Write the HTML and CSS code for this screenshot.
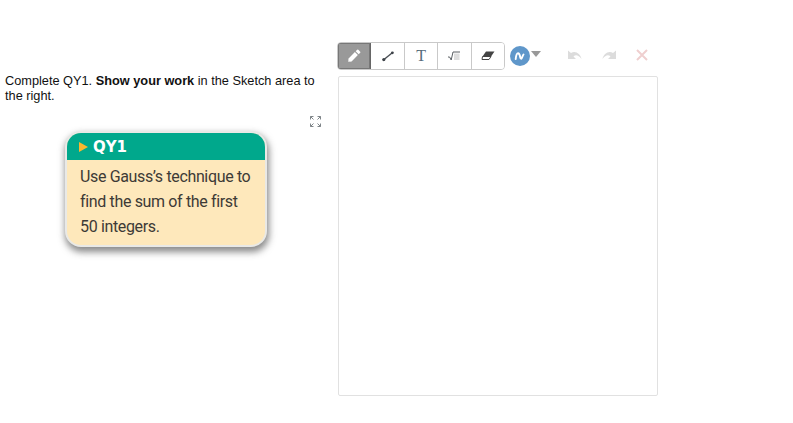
FILE: index.html
```html
<!DOCTYPE html>
<html lang="en">
<head>
<meta charset="utf-8">
<title>Sketch</title>
<link rel="stylesheet" href="styles.css">
</head>
<body>
<main class="page">
  <section class="question">
    <p class="prompt">Complete QY1. <strong>Show your work</strong> in the Sketch area to the right.</p>
    <div class="expand-row">
      <svg class="expand" width="11" height="11" viewBox="0 0 11 11" fill="none" stroke="#7f8589" stroke-width="1">
        <path d="M.5 3.500v-3h3M.5.5l3 3M10.500 3.500v-3h-3M10.500.5l-3 3M.5 7.500v3h3M.5 10.500l3-3M10.500 7.500v3h-3M10.500 10.500l-3-3"/>
      </svg>
    </div>
    <article class="card">
      <header class="card-head"><span class="card-arrow"></span><span class="card-title">QY1</span></header>
      <div class="card-body">
        <div>Use Gauss’s technique to</div>
        <div>find the sum of the first</div>
        <div>50 integers.</div>
      </div>
    </article>
  </section>
  <section class="sketch">
    <div class="toolbar">
      <div class="tools">
        <button class="tool tool-active" aria-label="Pencil">
          <svg width="14" height="14" viewBox="0 0 14 14"><path d="M1 13l.6-3.600 6.300-6.300 3 3-6.300 6.300z" fill="#fff"/><path d="M8.700 2.300l1.500-1.500a.8.800 0 0 1 1.100 0l1.900 1.900a.8.800 0 0 1 0 1.100l-1.500 1.500z" fill="#fff"/><path d="M1.300 11l1.700 1.700-2 .3z" fill="#ccc"/></svg>
        </button>
        <button class="tool" aria-label="Line">
          <svg width="14" height="14" viewBox="0 0 14 14"><path d="M3 10.500l8-6.500" stroke="#4a4f55" stroke-width="1.400"/><circle cx="2.800" cy="10.600" r="1.600" fill="#3d4248"/><circle cx="11.400" cy="3.800" r="1.400" fill="#3d4248"/></svg>
        </button>
        <button class="tool tool-text" aria-label="Text">T</button>
        <button class="tool" aria-label="Math">
          <svg width="14" height="14" viewBox="0 0 14 14"><rect x="7" y="4.500" width="5.500" height="6.500" fill="#dedede"/><path d="M1 8h1.600l1.600 3L6 3h7" fill="none" stroke="#5a5f63" stroke-width="1"/></svg>
        </button>
        <button class="tool" aria-label="Eraser">
          <svg width="14" height="14" viewBox="0 0 14 14"><path d="M5 2.500h8.500l-3.500 5H1.500z" fill="#444"/><path d="M1.500 7.500H10L8 10.500H1z" fill="#fff" stroke="#444" stroke-width="1"/></svg>
        </button>
      </div>
      <button class="stroke-btn" aria-label="Stroke colour">
        <span class="stroke-dot">
          <svg width="14" height="14" viewBox="0 0 14 14"><path d="M2.700 10C3 7 3.500 4.200 5 4.200s2 2.500 2.300 4.300c.3 1.500 1 1.500 1.500.5.500-1 1-2.500 1.700-3.500" fill="none" stroke="#fff" stroke-width="1.900" stroke-linecap="round"/></svg>
        </span>
        <span class="caret"></span>
      </button>
      <div class="history">
        <svg width="14" height="10" viewBox="0 0 14 10"><path d="M0 .5v8.500h8L5.500 6.500C7.500 4.500 10.500 5 13.500 9 12.500 3.500 7 0 3 3z" fill="#dcdcdc"/></svg>
        <svg width="14" height="10" viewBox="0 0 14 10"><path d="M14 .5v8.500H6L8.500 6.500C6.500 4.500 3.500 5 .5 9 1.500 3.500 7 0 11 3z" fill="#dcdcdc"/></svg>
        <svg width="12" height="12" viewBox="0 0 12 12"><path d="M1 1l10 10M11 1L1 11" stroke="#efcfcf" stroke-width="2"/></svg>
      </div>
    </div>
    <div class="canvas"></div>
  </section>
</main>
</body>
</html>
```

FILE: styles.css
```css
html, body {
  margin: 0;
  padding: 0;
  background: #fff;
}

.page {
  display: flex;
  align-items: flex-start;
  font-family: "Liberation Sans", Arial, sans-serif;
  color: #111;
}

.question {
  width: 337px;
  flex: none;
  padding-top: 73px;
  box-sizing: border-box;
}

.prompt {
  margin: 0 0 0 5px;
  width: 318px;
  font-size: 12.75px;
  line-height: 15px;
}

.expand-row {
  display: flex;
  justify-content: flex-end;
  padding: 13px 16px 0 0;
  height: 11px;
}

.expand {
  display: block;
}

.card {
  width: 198px;
  margin: 4px 0 0 65px;
  border: 2px solid #e9e9e6;
  border-radius: 16px;
  overflow: hidden;
  background: #fee8bb;
  box-shadow: 1px 4px 7px 1px rgba(60, 60, 60, .6);
}

.card-head {
  display: flex;
  align-items: center;
  height: 27px;
  background: #00a88c;
  padding-left: 12px;
  gap: 5px;
}

.card-arrow {
  width: 0;
  height: 0;
  border-left: 9px solid #fbb72f;
  border-top: 5px solid transparent;
  border-bottom: 5px solid transparent;
}

.card-title {
  font-family: "DejaVu Sans", sans-serif;
  font-size: 15px;
  font-weight: 700;
  color: #fff;
}

.card-body {
  padding: 4px 0 0 13px;
  height: 85px;
  box-sizing: border-box;
  font-family: "Roboto", sans-serif;
  font-size: 16px;
  letter-spacing: -.35px;
  line-height: 25px;
  color: #3d3a36;
}

.sketch {
  flex: none;
  width: 321px;
  padding-top: 42px;
}

.toolbar {
  display: flex;
  align-items: center;
  height: 28px;
}

.tools {
  display: flex;
  width: 168px;
  height: 28px;
  box-sizing: border-box;
  border: 1px solid #c9c9c9;
  border-radius: 4px;
  overflow: hidden;
}

.tool {
  flex: 1;
  display: flex;
  align-items: center;
  justify-content: center;
  padding: 0 0 1px;
  border: 0;
  border-right: 1px solid #c9c9c9;
  background: #fff;
}

.tool:last-child {
  border-right: 0;
}

.tool-active {
  background: #999;
  border-right-color: #666;
  box-shadow: 0 0 0 1px #777 inset;
}

.tool-text {
  font-family: "Liberation Serif", serif;
  font-size: 16px;
  color: #566b7a;
}

.stroke-btn {
  display: flex;
  align-items: center;
  gap: 1px;
  margin-left: 5px;
  padding: 0 0 1px;
  border: 0;
  background: none;
}

.stroke-dot {
  width: 20px;
  height: 20px;
  border-radius: 50%;
  background: #5f97ca;
  display: flex;
  align-items: center;
  justify-content: center;
}

.caret {
  margin-bottom: 4px;
  width: 0;
  height: 0;
  border-top: 6px solid #999;
  border-left: 5px solid transparent;
  border-right: 5px solid transparent;
}

.history {
  display: flex;
  align-items: center;
  gap: 20px;
  margin-left: 27px;
  padding-bottom: 2px;
}

.canvas {
  margin: 6px 0 0 1px;
  width: 320px;
  height: 320px;
  box-sizing: border-box;
  border: 1px solid #e1e1e1;
  border-radius: 2px;
}
```
